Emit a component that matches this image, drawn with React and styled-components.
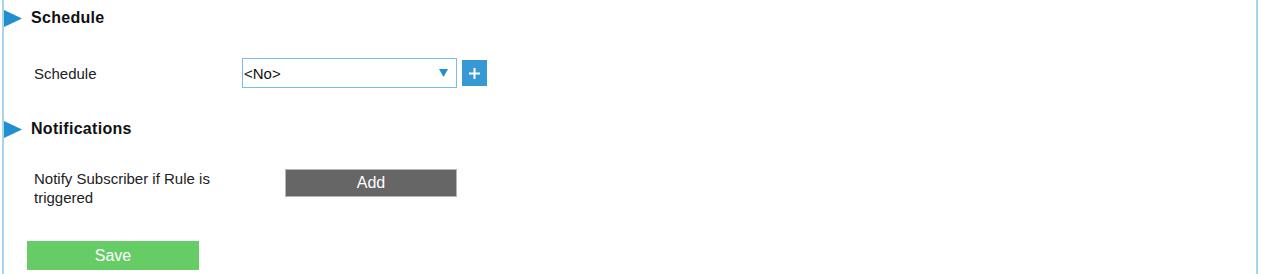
import React from "react";
import styled, { createGlobalStyle } from "styled-components";

const Global = createGlobalStyle`
  html, body { margin: 0; padding: 0; background: #fff; }
  body { font-family: "Liberation Sans", Arial, sans-serif; color: #222; }
`;

const Panel = styled.div`
  margin: 0 3px 0 2px;
  height: 274px;
  box-sizing: border-box;
  border-left: 2px solid #a9d4ee;
  border-right: 2px solid #a9d4ee;
  overflow: hidden;
  display: flex;
  flex-direction: column;
`;

const SectionHeader = styled.div`
  display: flex;
  align-items: center;
  height: 36px;
  margin-top: ${(p) => p.$top || 0}px;
  gap: 9px;
`;

const SectionTitle = styled.h2`
  margin: 0;
  font-size: 16px;
  font-weight: bold;
  color: #111;
  letter-spacing: 0.3px;
`;

const Row = styled.div`
  display: flex;
  align-items: ${(p) => p.$align || "center"};
  margin-top: ${(p) => p.$top || 0}px;
  padding-left: 30px;
  min-height: ${(p) => p.$height || 0}px;
`;

const Label = styled.div`
  width: ${(p) => p.$width}px;
  padding-right: ${(p) => p.$pr || 0}px;
  box-sizing: border-box;
  font-size: 15px;
  line-height: 19px;
  color: #222;
  flex-shrink: 0;
`;

const SelectBox = styled.div`
  width: 215px;
  height: 30px;
  box-sizing: border-box;
  border: 1px solid #7cbde6;
  display: flex;
  align-items: center;
  justify-content: space-between;
  padding: 0 8px 0 1px;
  font-size: 15px;
  color: #111;
  background: #fff;
`;

const PlusButton = styled.button`
  width: 25px;
  height: 26px;
  margin-left: 5px;
  border: none;
  padding: 0;
  background: #3799d3;
  display: flex;
  align-items: center;
  justify-content: center;
`;

const Action = styled.button`
  width: 172px;
  height: ${(p) => p.$h}px;
  margin-left: ${(p) => p.$ml || 0}px;
  box-sizing: border-box;
  border: ${(p) => (p.$variant === "gray" ? "1px solid #b5b5b5" : "none")};
  background: ${(p) => (p.$variant === "gray" ? "#666666" : "#66cc66")};
  color: #fff;
  font-family: "Liberation Sans", Arial, sans-serif;
  font-size: 16px;
  padding: 0;
  cursor: pointer;
`;

const SaveWrap = styled.div`
  margin-top: 34px;
  padding-left: 23px;
`;

const Triangle = () => (
  <svg width="18" height="17" viewBox="0 0 18 17">
    <polygon points="0,0 18,8.5 0,17" fill="#1f8fcf" />
  </svg>
);

const Arrow = () => (
  <svg width="9" height="8" viewBox="0 0 9 8">
    <polygon points="0,0 9,0 4.5,8" fill="#1f8fcf" />
  </svg>
);

const Plus = () => (
  <svg width="11" height="11" viewBox="0 0 11 11">
    <rect x="4.5" y="0" width="2" height="11" fill="#fff" />
    <rect x="0" y="4.5" width="11" height="2" fill="#fff" />
  </svg>
);

export default function App() {
  return (
    <>
      <Global />
      <Panel>
        <SectionHeader>
          <Triangle />
          <SectionTitle>Schedule</SectionTitle>
        </SectionHeader>
        <Row $top={22} $height={29}>
          <Label $width={208}>Schedule</Label>
          <SelectBox>
            <span>&lt;No&gt;</span>
            <Arrow />
          </SelectBox>
          <PlusButton aria-label="add schedule">
            <Plus />
          </PlusButton>
        </Row>
        <SectionHeader $top={23}>
          <Triangle />
          <SectionTitle>Notifications</SectionTitle>
        </SectionHeader>
        <Row $top={22} $align="flex-start">
          <Label $width={251} $pr={50}>Notify Subscriber if Rule is triggered</Label>
          <Action $variant="gray" $h={28}>Add</Action>
        </Row>
        <SaveWrap>
          <Action $h={29}>Save</Action>
        </SaveWrap>
      </Panel>
    </>
  );
}
